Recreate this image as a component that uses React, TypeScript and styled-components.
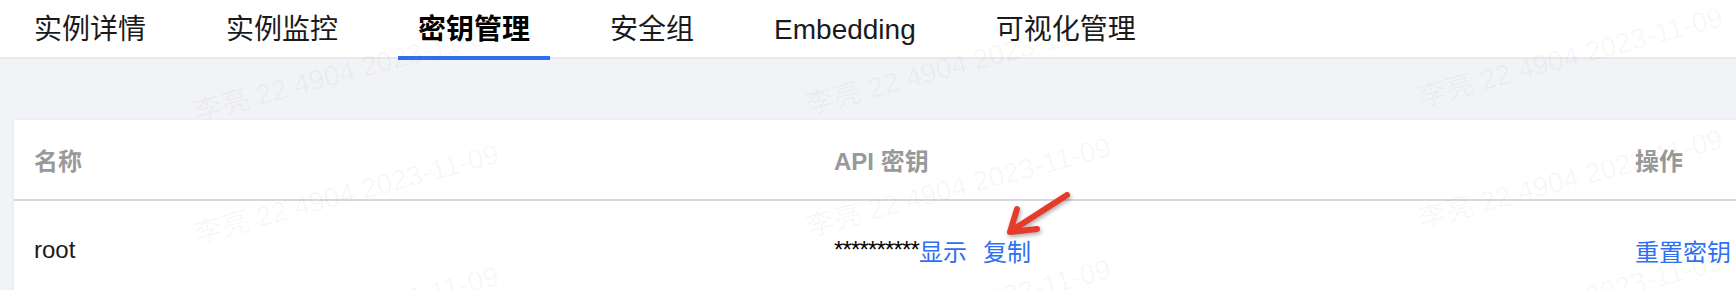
import React from 'react';
import styled, {createGlobalStyle, css} from 'styled-components';

const GlobalStyle = createGlobalStyle`
  html, body {
    margin: 0;
    padding: 0;
    overflow: hidden;
  }

  body {
    background: #f2f3f7;
    font-family: "Liberation Sans", "Noto Sans CJK SC", sans-serif;
  }
`

const Page = styled.div`
  position: relative;
  width: 1736px;
  height: 290px;
  overflow: hidden;
  background: #f2f3f7;
`

const TabBar = styled.nav`
  display: flex;
  gap: 40px;
  height: 57px;
  padding-left: 14px;
  background: #fff;
  border-bottom: 2px solid #e6e8ec;
`

const Tab = styled.div<{ $active?: boolean }>`
  position: relative;
  padding: 3px 20px 0;
  line-height: 54px;
  font-size: 28px;
  color: #1a1a1a;
  white-space: nowrap;
  ${p => p.$active && css`
    font-weight: 700;
    color: #000;

    &::after {
      content: '';
      position: absolute;
      left: 0;
      right: 0;
      bottom: -3px;
      height: 4px;
      background: #2d6ff2;
    }
  `}
`

const Content = styled.div`
  padding: 61px 0 0 14px;
`

const Card = styled.div`
  width: 1801px;
  background: #fff;
  box-shadow: 0 1px 4px rgba(0, 0, 0, 0.08);
`

const Row = styled.div<{ $head?: boolean }>`
  display: grid;
  grid-template-columns: 800px 801px 200px;
  align-items: center;
  height: ${p => (p.$head ? 79 : 98)}px;
  ${p => p.$head && css`border-bottom: 2px solid #d5d9e2;`}
`

const Cell = styled.div<{ $head?: boolean }>`
  display: flex;
  align-items: center;
  padding-left: 20px;
  font-size: 24px;
  color: ${p => (p.$head ? '#999' : '#1a1a1a')};
  font-weight: ${p => (p.$head ? 600 : 400)};
  white-space: nowrap;
`

const Masked = styled.span`
  letter-spacing: -0.85px;
  color: #000;
`

const Link = styled.a`
  color: #2f6ff3;
  text-decoration: none;
  cursor: pointer;

  & + & {
    margin-left: 16px;
  }
`

const WatermarkLayer = styled.div`
  position: absolute;
  inset: 0;
  z-index: 2;
  pointer-events: none;
  overflow: hidden;
`

const Mark = styled.span`
  position: absolute;
  font-size: 28px;
  line-height: 28px;
  white-space: nowrap;
  color: rgba(0, 0, 0, 0.038);
  transform: rotate(-15deg);
  transform-origin: 0 50%;
`

const Arrow = styled.svg`
  position: absolute;
  left: 1000px;
  top: 185px;
  z-index: 3;
  overflow: visible;
  filter: drop-shadow(1px 2px 2px rgba(0, 0, 0, 0.35));
`

const tabs = ['实例详情', '实例监控', '密钥管理', '安全组', 'Embedding', '可视化管理'];
const activeTab = '密钥管理';
const watermarkText = '李亮 22 4904 2023-11-09';

const marks: { x: number; y: number }[] = [];
for (let row = 0; row < 3; row++) {
  for (let col = 0; col < 3; col++) {
    marks.push({x: 195 + 612 * col, y: 99 + 122 * row - 7.5 * col});
  }
}

const App = () => {
  return (
    <Page>
      <GlobalStyle/>
      <TabBar>
        {tabs.map(t => <Tab key={t} $active={t === activeTab}>{t}</Tab>)}
      </TabBar>
      <Content>
        <Card>
          <Row $head>
            <Cell $head>名称</Cell>
            <Cell $head>API 密钥</Cell>
            <Cell $head>操作</Cell>
          </Row>
          <Row>
            <Cell>root</Cell>
            <Cell>
              <Masked>**********</Masked>
              <Link>显示</Link>
              <Link>复制</Link>
            </Cell>
            <Cell><Link>重置密钥</Link></Cell>
          </Row>
        </Card>
      </Content>
      <WatermarkLayer>
        {marks.map((m, i) => <Mark key={i} style={{left: m.x, top: m.y}}>{watermarkText}</Mark>)}
      </WatermarkLayer>
      <Arrow width="80" height="60" viewBox="0 0 80 60">
        <g fill="none" stroke="#e63b2b" strokeWidth="6" strokeLinecap="round" strokeLinejoin="round">
          <path d="M67 10 L11 46"/>
          <path d="M17 24 L10 47 L37 44"/>
        </g>
      </Arrow>
    </Page>
  )
}

export default App;
